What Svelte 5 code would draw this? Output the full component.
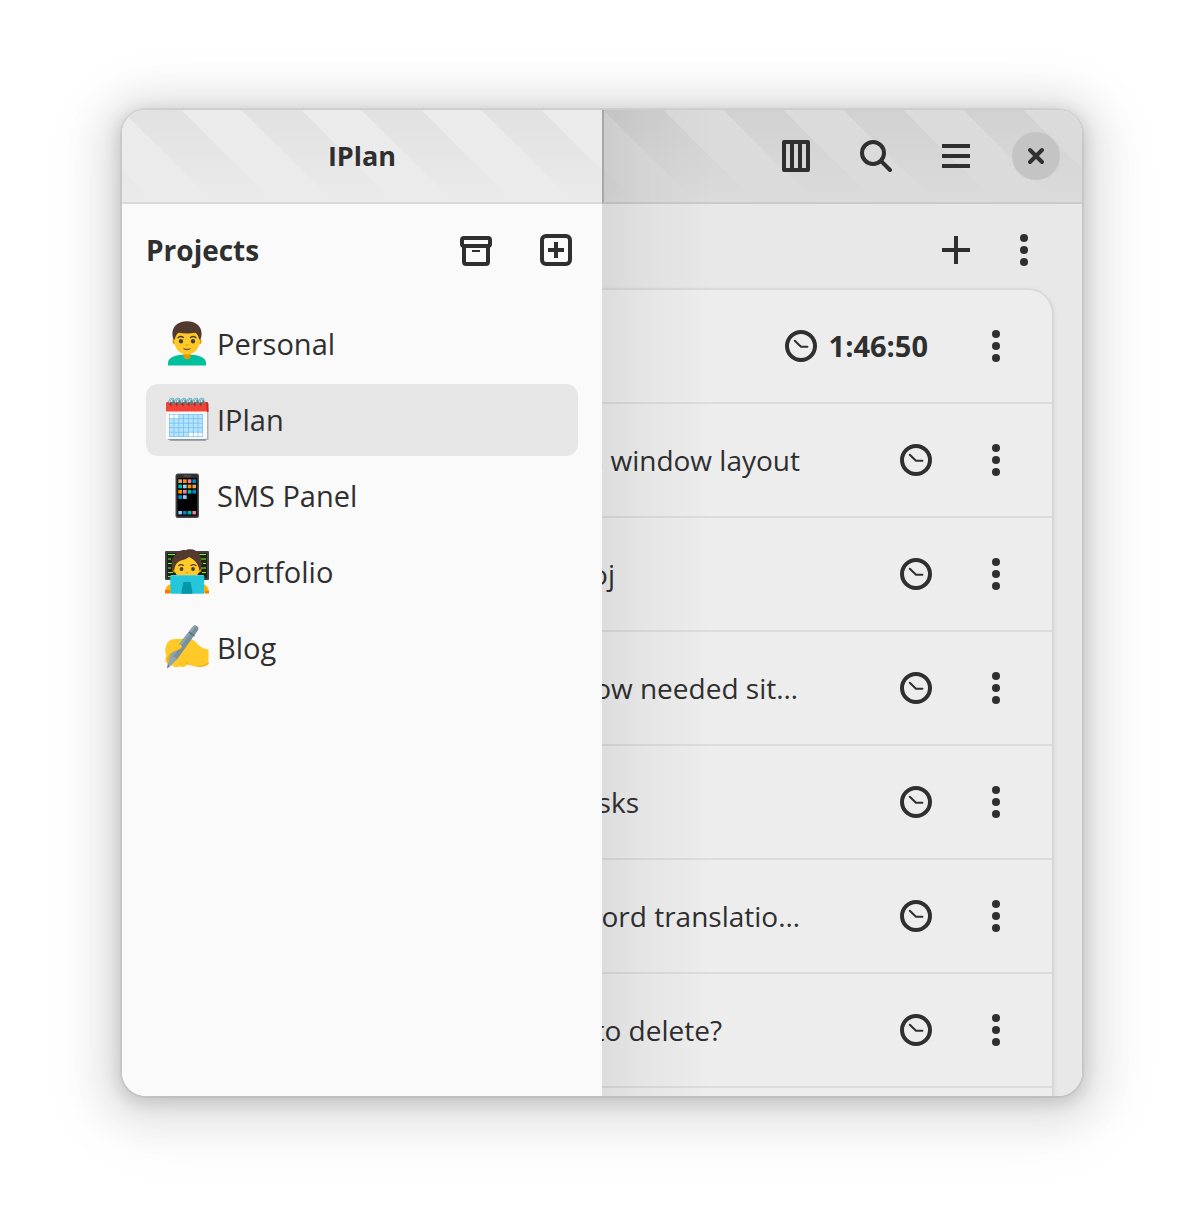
<script>
  const projects = [
    { name: 'Personal', icon: 'man' },
    { name: 'IPlan', icon: 'calendar', selected: true },
    { name: 'SMS Panel', icon: 'phone' },
    { name: 'Portfolio', icon: 'coder' },
    { name: 'Blog', icon: 'writing' }
  ];

  // extent: how far each title reaches past the edge of the sidebar
  const tasks = [
    { title: '', extent: 0, time: '1:46:50' },
    { title: 's window layout', extent: 198 },
    { title: 'oj', extent: 13 },
    { title: 'ow needed sit…', extent: 196 },
    { title: 'sks', extent: 37 },
    { title: 'ord translatio…', extent: 198 },
    { title: 'to delete?', extent: 120 },
    { title: '', extent: 0 }
  ];

  const appColours = [
    ['#e0a458', '#ff8f00', '#f478a8', '#0288d1'],
    ['#00bfa5', '#81d4fa', '#ff8f00', '#e0a458'],
    ['#ff8f00', '#f478a8', '#00bfa5', '#0288d1'],
    ['#0288d1', '#81d4fa']
  ];
  const dock = ['#81d4fa', '#0288d1', '#00bfa5', '#f478a8'];
</script>

{#snippet dots()}
  <svg class="icon" viewBox="0 0 16 16" aria-hidden="true">
    <circle cx="8" cy="2" r="2" /><circle cx="8" cy="8" r="2" /><circle cx="8" cy="14" r="2" />
  </svg>
{/snippet}

{#snippet clock()}
  <svg class="icon line" viewBox="0 0 16 16" aria-hidden="true">
    <circle cx="8" cy="8" r="7" />
    <path class="thin" d="M4.9 5.4 8 8.4h3.2" />
  </svg>
{/snippet}

{#snippet emoji(kind)}
  <svg class="emoji" viewBox="0 0 48 48" aria-hidden="true">
    {#if kind === 'man'}
      <path fill="#00bf9c" d="M5 45.500v-2.500c0-5.500 7-8.500 19-8.500s19 3 19 8.500v2.500z" />
      <path fill="#e59600" d="M20.500 31h7v5.500c0 1.900-1.400 2.700-3.500 2.700s-3.500-.8-3.500-2.700z" />
      <rect x="9.500" y="18" width="29" height="6.500" rx="3.200" fill="#e59600" />
      <path fill="#ffca28" d="M24 5c-8 0-13 6-13 15 0 8.500 6 14.500 13 14.500S37 28.500 37 20C37 11 32 5 24 5z" />
      <path fill="#543930" d="M24 1.200C14.500 1.200 9 7 9.400 14.500c.1 2 .7 4 1.300 5h1.100c.5-3 1.700-5.500 3.700-6.800 5.500 1 11.500 1 17 0 2 1.300 3.200 3.800 3.700 6.800h1.100c.6-1 1.200-3 1.300-5C39 7 33.500 1.200 24 1.200z" />
      <ellipse cx="18" cy="21.300" rx="2.100" ry="2.300" fill="#404040" /><ellipse cx="30" cy="21.300" rx="2.100" ry="2.300" fill="#404040" />
      <path fill="none" stroke="#543930" stroke-width="1.300" stroke-linecap="round" d="M15 17.800c1.500-1.400 4-1.400 5.500-.2M27.500 17.600c1.500-1.200 4-1.200 5.500.2" />
      <path fill="#e59600" d="M22.300 24.600h3.400c-.5 1.500-2.900 1.500-3.400 0z" />
      <path fill="#795548" d="M20 28c2.500 1 5.500 1 8 0-.8 3-7.200 3-8 0z" />
    {:else if kind === 'calendar'}
      <path fill="#b0b0b0" d="M5 44h40.500V12l-3 .5V42H5z" />
      <path fill="#8c9194" d="M6 42.500h37v2.200H7z" />
      <rect x="3" y="8" width="41" height="35" rx="1.500" fill="#f8f8f8" />
      <path fill="#f44336" d="M3 15.500v-8c0-1 .7-1.500 1.500-1.500h38c.8 0 1.500.5 1.500 1.500v8z" />
      <path fill="#c62828" d="M43 6h1.500l1 2v8H44z" />
      <rect x="6" y="18" width="34" height="23" fill="#7dbdf2" />
      {#each [0, 1, 2, 3, 4] as r}
        {#each [0, 1, 2, 3, 4, 5, 6] as c}
          <rect
            x={6.6 + c * 4.8}
            y={18.6 + r * 4.5}
            width="4"
            height="3.700"
            fill={(r === 0 && c < 2) || (r === 4 && c > 3) ? '#ffffff' : '#b3e5fc'}
          />
        {/each}
      {/each}
      {#each [8, 14, 20, 26, 32, 38] as x}
        <circle cx={x} cy="8.300" r="1.400" fill="#8e2a24" />
        <path transform="translate({x} 0)" fill="none" stroke="#3f8798" stroke-width="2" stroke-linecap="round" d="M-1.500 6.500C-1.800 2.500 2.500 1.300 2.500 5c0 1.300-.4 2.300-1.300 2.900" />
        <path transform="translate({x} 0)" fill="none" stroke="#a5dbe6" stroke-width="1.200" stroke-linecap="round" d="M-1.500 6C-1.600 2.500 1.500 2 2.200 3.800" />
      {/each}
    {:else if kind === 'phone'}
      <rect x="12.500" y="1.500" width="23.500" height="44.500" rx="2.500" fill="#4a4a4a" />
      <rect x="13.500" y="2.300" width="21.500" height="42.700" rx="1.800" fill="#2f2f2f" />
      <rect x="14.500" y="6" width="19.500" height="37.500" fill="#000" />
      <rect x="20.500" y="3.400" width="7.500" height="1.200" rx=".6" fill="#646464" />
      {#each appColours as row, r}
        {#each row as colour, c}
          <rect x={15.300 + c * 4.700} y={7.300 + r * 5.300} width="3.700" height="3.700" fill={colour} />
        {/each}
      {/each}
      {#each dock as colour, c}
        <rect x={15.300 + c * 4.700} y="39" width="3.700" height="3.400" fill={colour} />
      {/each}
    {:else if kind === 'coder'}
      <rect x="2" y="3" width="44" height="29" rx="1" fill="#424242" />
      <rect x="4" y="5" width="40" height="25" fill="#1f1f1f" />
      <path stroke="#76ff03" stroke-width="1.100" fill="none" d="M5 6.500h7M14 6.500h2M35 6.500h8M5 11h3M10 11h5M38 11h5M5 15.500h5M37 15.500h1.500M40 15.500h3M5 20h3M38 20h5M5 24.500h5M39 24.500h4M5 28.500h3M37 28.500h3" />
      <path fill="#ffb300" d="M2 45c0-6 3-8.500 7-9l30 0c4 .5 7 3 7 9z" />
      <path fill="#f57c00" d="M2 42h5v3.500H2zM42 43h4v2.500h-4z" />
      <rect x="9.500" y="17" width="29" height="8" rx="4" fill="#e59600" />
      <path fill="#ffca28" d="M24 6c-8 0-12.500 5-12.500 14 0 7 5 12 12.500 12s12.500-5 12.500-12C36.500 11 32 6 24 6z" />
      <path fill="#543930" d="M27 1.300c-2 0-3 .4-4.500.9-3-.8-6 .3-8 2.300l-1-1.500c-.3 1 0 2 0 3C10 8 8 12 9 20.500l2 2c1-5 2.500-8.500 7-10 4-1 6-2 8-3.500 4 2 9 5 10.500 13.500l1.800-2C40 9 36 1.300 27 1.300z" />
      <path fill="none" stroke="#543930" stroke-width="1.200" stroke-linecap="round" d="M15.500 17.600c1.500-1.200 3.500-1.200 5-.2M28 17.400c1.500-1 3.500-1 5 .2" />
      <ellipse cx="18.500" cy="21" rx="1.900" ry="2.100" fill="#404040" /><ellipse cx="30" cy="21" rx="1.900" ry="2.100" fill="#404040" />
      <path fill="#e59600" d="M22.500 24.500h3.400l-1.700 1.300z" />
      <path fill="#26c6da" d="M9 27h30.500c1.200 0 1.800.7 1.800 1.700L41 45.700H7.500L7.200 28.700C7.200 27.700 7.800 27 9 27z" />
      <path fill="#4dd0e1" d="M8 27h32.500v1H8z" />
      <path fill="#0097a7" d="M20.500 34h7l1.800 9.500v2.200H18.500v-2.200z" />
    {:else}
      <path fill="#ffca28" d="M3 22c1-4 4-7 9-7l13-.5c4 0 7 2.500 10 6 4 3.500 7 4.500 10.500 5V40c-3.500 2.500-7.500 3.300-12 2.800l-9-2.300c-2.500 3-6 3-8 1.800-2 1.500-5.500 1.200-6.500-.8-3 1-5.500-.3-6-2.500C2 37.500 1.700 35 3.500 32 2 29 2 25 3 22z" />
      <path fill="#edab1f" d="M12 26c-3.500 2-6 4-7.500 7-.8 2.500-.8 4.500.5 6 0-3.500 2.500-5.500 6-8zM16 36.500c1.500 1.500 2 3.500 1.500 5 1.200-.5 1.500-1.500 1.300-2.500zM22 36.500c.5 2 1.500 3 3.500 4l1.500.2zM34 42.800c4.500.3 8.500-.5 11.500-2.800v-1.500c-3.500 2.300-7 3.500-11.500 3.800z" />
      <path fill="#78909c" d="M29.500 3c1-1.600 2.600-2 4.300-1 1.700 1 2.200 2.600 1.200 4.200L14 35.500 7.500 31z" />
      <path fill="#90a4ae" d="M29.500 3c1-1.600 2.500-1.900 3.800-1.300L10 32.500 7.500 31z" />
      <path fill="#546e7a" d="M26.300 7.600l5.600 3.900-.7 1-5.700-3.900z" />
      <path fill="#90a4ae" d="M7.500 31l6.500 4.500-8.500 8c-1 .6-1.600.2-1.400-1z" />
      <path fill="#607d8b" d="M5 40.500l1.500 1.800L4 44.500z" />
      <path fill="#ffca28" d="M4 24c3-2.500 8-4.500 13-3.500 2.500.8 2.500 3.500 0 4.300l-6 2.700c-3 1-5.500 2-8 4.500z" />
      <path fill="none" stroke="#edab1f" stroke-width=".9" stroke-linecap="round" d="M18.300 23.500c-.3.700-.8 1.100-1.500 1.400l-6 2.700" />
    {/if}
  </svg>
{/snippet}

<div class="desktop">
  <div class="window">
    <aside class="sidebar">
      <header class="bar"><h1>IPlan</h1></header>
      <div class="section">
        <h2>Projects</h2>
        <button class="tool" aria-label="Archived projects">
          <svg class="icon line" viewBox="0 0 16 16" aria-hidden="true">
            <rect x="1" y="2" width="14" height="4" rx="1" />
            <path d="M2 6v8q0 1 1 1h10q1 0 1-1V6" />
            <path class="thin flat" d="M6 8.500h4" />
          </svg>
        </button>
        <button class="tool" aria-label="New project">
          <svg class="icon line" viewBox="0 0 16 16" aria-hidden="true">
            <rect x="1" y="1" width="14" height="14" rx="2" />
            <path d="M4 8h8M8 4v8" />
          </svg>
        </button>
      </div>
      <nav class="projects" aria-label="Projects">
        {#each projects as project}
          <button class="project" class:selected={project.selected}>
            {@render emoji(project.icon)}
            <span>{project.name}</span>
          </button>
        {/each}
      </nav>
    </aside>

    <main class="content">
      <header class="bar actions">
        <button class="tool" aria-label="Board view">
          <svg class="icon line" viewBox="0 0 16 16" aria-hidden="true">
            <rect x="2" y="1" width="12" height="14" />
            <path d="M6 2v12M10 2v12" />
          </svg>
        </button>
        <button class="tool" aria-label="Search">
          <svg class="icon line" viewBox="0 0 16 16" aria-hidden="true">
            <circle cx="6.500" cy="6.500" r="5.500" />
            <path stroke-linecap="round" d="M10.700 10.700 15 15" />
          </svg>
        </button>
        <button class="tool" aria-label="Main menu">
          <svg class="icon line" viewBox="0 0 16 16" aria-hidden="true"><path d="M1 3h14M1 8h14M1 13h14" /></svg>
        </button>
        <button class="tool close" aria-label="Close">
          <svg class="icon line" viewBox="0 0 16 16" aria-hidden="true">
            <path stroke-linecap="round" d="M5 5l6 6M11 5l-6 6" />
          </svg>
        </button>
      </header>
      <div class="list-tools">
        <button class="tool" aria-label="New task">
          <svg class="icon line" viewBox="0 0 16 16" aria-hidden="true"><path d="M1 8h14M8 1v14" /></svg>
        </button>
        <button class="tool" aria-label="List options">{@render dots()}</button>
      </div>
      <ul class="tasks">
        {#each tasks as task}
          <li>
            <div class="title"><span style:width="{task.extent}px">{task.title}</span></div>
            <button class="tool timer" aria-label={task.time ? null : 'Start timer'}>
              {@render clock()}{#if task.time}<span>{task.time}</span>{/if}
            </button>
            <button class="tool" aria-label="Task options">{@render dots()}</button>
          </li>
        {/each}
      </ul>
    </main>
  </div>
</div>

<style>
  :global(body) {
    background: #fff;
  }
  .desktop {
    box-sizing: border-box;
    height: 100vh;
    padding: 110px 122px 134px;
    color: #2f2f2f;
    font: 29px/40px 'Open Sans', 'Noto Sans', sans-serif;
  }
  .window {
    display: grid;
    grid-template-columns: 1fr 1fr;
    height: 100%;
    border-radius: 24px;
    overflow: hidden;
    box-shadow:
      0 0 0 2px rgba(0, 0, 0, 0.05),
      0 4px 16px 4px rgba(0, 0, 0, 0.13),
      0 6px 40px 20px rgba(0, 0, 0, 0.09),
      0 12px 64px 32px rgba(0, 0, 0, 0.04);
  }
  .sidebar {
    min-width: 0;
    background: #fafafa;
  }
  .content {
    position: relative;
    display: flex;
    flex-direction: column;
    min-width: 0;
    overflow: hidden;
    background: #e8e8e8;
  }
  /* shadow the sidebar casts on the content below it */
  .content::after {
    content: '';
    position: absolute;
    inset: 0 auto 0 0;
    width: 112px;
    pointer-events: none;
    background: linear-gradient(to right, rgba(0, 0, 0, 0.07), rgba(0, 0, 0, 0.03) 40%, transparent);
  }
  .bar {
    --base: #ebebeb;
    --clear: #ebebeb00;
    --stripe: #e1e1e1;
    box-sizing: border-box;
    flex: none;
    display: flex;
    align-items: center;
    justify-content: center;
    height: 94px;
    border-bottom: 2px solid #dadada;
    background:
      linear-gradient(to bottom, var(--clear), var(--base)),
      linear-gradient(45deg, var(--stripe) 25%, var(--base) 25% 50%, var(--stripe) 50% 75%, var(--base) 75%) 0 0 / 120px 120px,
      var(--base);
  }
  .actions {
    --base: #dbdbdb;
    --clear: #dbdbdb00;
    --stripe: #d1d1d1;
    justify-content: flex-end;
    gap: 32px;
    padding-right: 22px;
    border-bottom-color: #cacaca;
    border-left: 2px solid #b4b4b4;
  }
  h1,
  h2 {
    margin: 0;
    font-size: 28px;
    line-height: 40px;
    font-weight: 700;
  }
  h1 {
    font-size: 27px;
  }
  h2 {
    flex: 1;
  }
  button {
    margin: 0;
    padding: 0;
    border: 0;
    background: none;
    color: inherit;
    font: inherit;
    cursor: pointer;
  }
  .tool {
    flex: none;
    display: flex;
    align-items: center;
    justify-content: center;
    min-width: 48px;
    height: 48px;
    border-radius: 24px;
  }
  .close {
    background: #c4c4c4;
  }
  .icon {
    flex: none;
    width: 32px;
    height: 32px;
    fill: currentColor;
  }
  .line {
    fill: none;
    stroke: currentColor;
    stroke-width: 2;
    stroke-linejoin: round;
  }
  .thin {
    stroke-width: 1;
    stroke-linecap: round;
  }
  .flat {
    stroke-linecap: butt;
  }
  .section {
    display: flex;
    align-items: center;
    gap: 32px;
    height: 92px;
    padding: 0 22px 0 24px;
  }
  .projects {
    display: flex;
    flex-direction: column;
    gap: 4px;
    padding: 12px 24px;
  }
  .project {
    display: flex;
    align-items: center;
    gap: 6px;
    height: 72px;
    padding: 0 17px;
    border-radius: 12px;
    text-align: left;
  }
  .selected {
    background: #e6e6e6;
  }
  .emoji {
    flex: none;
    width: 48px;
    height: 48px;
  }
  .list-tools {
    flex: none;
    display: flex;
    align-items: center;
    justify-content: flex-end;
    gap: 20px;
    height: 92px;
    margin-bottom: -6px;
    padding-right: 34px;
  }
  .tasks {
    flex: 1;
    min-height: 0;
    margin: 0 30px 0 0;
    padding: 0;
    list-style: none;
    background: #ededed;
    border-radius: 0 24px 0 0;
    box-shadow:
      0 0 0 2px rgba(0, 0, 0, 0.03),
      0 2px 6px 2px rgba(0, 0, 0, 0.07);
  }
  li {
    display: flex;
    align-items: center;
    gap: 32px;
    height: 112px;
    padding-right: 32px;
    border-bottom: 2px solid #dcdcdc;
  }
  .title {
    flex: 1;
    min-width: 0;
    font-size: 28px;
  }
  .title span {
    display: flex;
    justify-content: flex-end;
    overflow: hidden;
    white-space: nowrap;
  }
  .timer {
    gap: 12px;
    padding: 0 8px;
    font-weight: 700;
  }
  .timer span {
    padding-right: 4px;
  }
</style>
